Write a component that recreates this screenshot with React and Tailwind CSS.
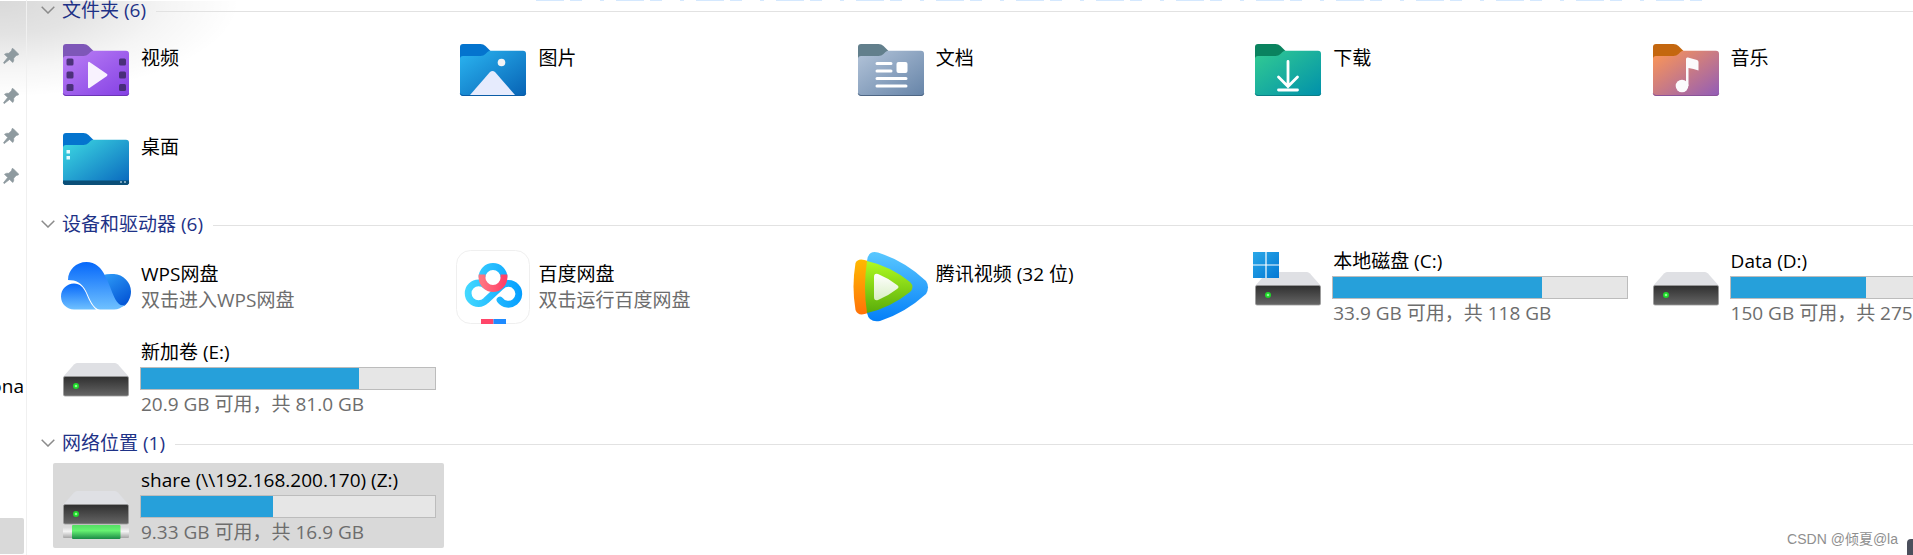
import React from 'react';
import clsx from 'clsx';

const Folder = ({ id, tab, from, to, edge, children }) => (
    <svg viewBox="0 0 76 76" className="size-19 shrink-0" aria-hidden="true">
        <defs>
            <linearGradient id={id} x1="0" y1="0" x2="1" y2="1">
                <stop offset="0" stopColor={from} />
                <stop offset="1" stopColor={to} />
            </linearGradient>
        </defs>
        <path d="M5 12q0-3 3-3h17.500q3 0 5 2l5 5v8H5z" fill={tab} />
        <path d="M5 24q0-3 3-3h17.500q3 0 5-2l2-2q1.500-1.300 3-1.300H68q3 0 3 3V58q0 3-3 3H8q-3 0-3-3z" fill={`url(#${id})`} />
        <path d="M5.300 58.500q.500 2 2.700 2h60q2.200 0 2.700-2" fill="none" stroke={edge} strokeWidth="1" />
        {children}
    </svg>
);

const VideosIcon = () => (
    <Folder id="videos" tab="#7e57b8" from="#bb80f5" to="#8440e4" edge="#6b35b5">
        {[27, 40, 52.500].map((y) => (
            <g key={y} fill="#3f2a6b" opacity=".88">
                <rect x="8.500" y={y - 3.500} width="7" height="7" rx="1.500" />
                <rect x="61" y={y - 3.500} width="7" height="7" rx="1.500" />
            </g>
        ))}
        <path d="M30 27.500v25q.300 1.200 1.500.600l17.500-12.200q1-1 0-1.800l-17.500-12.200q-1.200-.600-1.500.600z" fill="#f8f2fe" />
    </Folder>
);

const PicturesIcon = () => (
    <Folder id="pictures" tab="#0474ce" from="#2bb5f1" to="#0762b4" edge="#0a5ca6">
        <path d="M15 60 35 37q2.500-2 5 0l20 23z" fill="#e6ebfd" />
        <circle cx="46.500" cy="27.500" r="3.800" fill="#f2f3f5" />
    </Folder>
);

const DocumentsIcon = () => (
    <Folder id="documents" tab="#627f8c" from="#b3c4d9" to="#6684a8" edge="#4e6684">
        <path d="M24 28.500h14M24 36h14M24 43.500h29M24 51h29" stroke="#fff" strokeWidth="3" strokeLinecap="round" />
        <rect x="43.500" y="27" width="11" height="11" rx="2" fill="#fff" />
    </Folder>
);

const DownloadsIcon = () => (
    <Folder id="downloads" tab="#0a835f" from="#33cc92" to="#0090ab" edge="#0b7f86">
        <path d="M38 26.500v24M28.500 42l9.500 9.500 9.500-9.500M28.500 55h19" fill="none" stroke="#fff" strokeWidth="2.800" strokeLinecap="round" />
    </Folder>
);

const MusicIcon = () => (
    <Folder id="music" tab="#c4670f" from="#ff9853" to="#915cb8" edge="#8a5398">
        <circle cx="34" cy="51" r="6.300" fill="#fbfafc" />
        <path d="M38 51V24q0-2 2-1.500l9 2.500q1.500.500 1.500 2v8.500q-5-2-10-2.500v18z" fill="#fbfafc" />
    </Folder>
);

const DesktopIcon = () => (
    <Folder id="desktop" tab="#0474ce" from="#3edbe3" to="#0865bd" edge="#0b4d75">
        <path d="M5 56.500h66V58q0 3-3 3H8q-3 0-3-3z" fill="#0b4f78" />
        <path d="M8.500 26h3.500v3.500H8.500zM8.500 32h3.500v3.500H8.500z" fill="#e6fbfd" />
        <path d="M62 58h2M66 58h2" stroke="#9fc1d4" strokeWidth="1.500" />
    </Folder>
);

const WpsIcon = () => (
    <svg viewBox="0 0 76 76" className="size-19 shrink-0" aria-hidden="true">
        <defs>
            <linearGradient id="wps-main" x1="0" y1="0" x2="0" y2="1">
                <stop offset="0" stopColor="#0668fa" />
                <stop offset="1" stopColor="#6fc1ff" />
            </linearGradient>
            <linearGradient id="wps-side" x1="0" y1="0" x2=".6" y2="1">
                <stop offset="0" stopColor="#2f9df8" />
                <stop offset="1" stopColor="#0557d6" />
            </linearGradient>
        </defs>
        <path d="M45 26Q50 24.500 56 25c9 .500 17 8 17 17.500 0 6-3 12-7 14.500l-6 1z" fill="url(#wps-side)" />
        <path d="M10 31C10 21 18 13 28.500 13 37 13 44 19 47 27c6 10 8 23 14 28 2 1.500 4 1.500 6 .500C64 58.500 60 60.500 56 60.500H42C35 60 32 50 28 42 24 34 18 31 10 31z" fill="url(#wps-main)" />
        <path d="M16 34.500c6 0 9.500 4 12 9.500 2.500 6 5 12 10 16.500H16C9 60.500 3 55 3 47.500s6-13 13-13z" fill="url(#wps-main)" />
    </svg>
);

const BaiduIcon = () => (
    <svg viewBox="0 0 76 76" className="size-19 shrink-0" aria-hidden="true">
        <defs>
            <linearGradient id="bd-blue" gradientUnits="userSpaceOnUse" x1="8" y1="0" x2="66" y2="0">
                <stop offset="0" stopColor="#46dbff" />
                <stop offset="1" stopColor="#069fff" />
            </linearGradient>
            <linearGradient id="bd-red" x1="0" y1="0" x2="1" y2="0">
                <stop offset="0" stopColor="#ff7480" />
                <stop offset="1" stopColor="#ff4168" />
            </linearGradient>
        </defs>
        <rect x="1.500" y="1.500" width="73" height="73" rx="14" fill="#fff" stroke="#efefef" />
        <g fill="none" stroke="url(#bd-blue)" strokeWidth="6.800" strokeLinecap="round">
            <path d="M27 28.500a11 11 0 0 1 22 0" strokeLinecap="butt" />
            <path d="M31 37A10.400 10.400 0 1 0 31 51.500L46 37.500A10.400 10.400 0 1 1 45 51" />
        </g>
        <path d="M27 25.500v3a11 11 0 0 0 22 0v-3" fill="none" stroke="url(#bd-red)" strokeWidth="6.800" />
        <path d="M26 70h12.500v5H26z" fill="#ff4569" />
        <path d="M38.500 70H51v5H38.500z" fill="#1e8bff" />
    </svg>
);

const TencentIcon = () => (
    <svg viewBox="0 0 76 76" className="size-19 shrink-0" aria-hidden="true">
        <defs>
            <linearGradient id="tx-orange" x1="0" y1="0" x2="0" y2="1">
                <stop offset="0" stopColor="#ffb900" />
                <stop offset="1" stopColor="#ff7208" />
            </linearGradient>
            <linearGradient id="tx-blue" x1="0" y1="0" x2="0" y2="1">
                <stop offset="0" stopColor="#5ac8ff" />
                <stop offset="1" stopColor="#037ff8" />
            </linearGradient>
            <linearGradient id="tx-green" x1="0" y1="0" x2="0" y2="1">
                <stop offset="0" stopColor="#b0fb22" />
                <stop offset="1" stopColor="#59ac0a" />
            </linearGradient>
            <linearGradient id="tx-play" x1="0" y1="0" x2="0" y2="1">
                <stop offset="0" stopColor="#fff" />
                <stop offset="1" stopColor="#d9efc4" />
            </linearGradient>
        </defs>
        <path d="M15 12Q5 8 2.500 14-1.500 38 2.500 61 5 68 15 64z" fill="url(#tx-orange)" />
        <path d="M14 12Q15 1 25 3.500 52 12 73 32q4 6 0 13Q52 64 27 72 16 74 14 64z" fill="url(#tx-blue)" />
        <path d="M14 12Q37 17 57 33q5 5 0 10Q37 59 14 64q-4-26 0-52z" fill="url(#tx-green)" />
        <path d="M21 28q0-4 4-3 10 4 19 11 3 2 0 4-9 7-19 11-4 1-4-3z" fill="url(#tx-play)" />
    </svg>
);

const DriveIcon = ({ windows, network }) => (
    <svg viewBox="0 0 76 76" className="size-19 shrink-0" aria-hidden="true">
        <defs>
            <linearGradient id="drive-front" x1="0" y1="0" x2="0" y2="1">
                <stop offset="0" stopColor="#2f2f2f" />
                <stop offset="1" stopColor="#666" />
            </linearGradient>
            <linearGradient id="drive-pipe" x1="0" y1="0" x2="0" y2="1">
                <stop offset="0" stopColor="#d8d8d8" />
                <stop offset=".4" stopColor="#f4f4f4" />
                <stop offset="1" stopColor="#a5a5a5" />
            </linearGradient>
            <linearGradient id="drive-green" x1="0" y1="0" x2="0" y2="1">
                <stop offset="0" stopColor="#54df64" />
                <stop offset=".4" stopColor="#66f272" />
                <stop offset="1" stopColor="#1a8a46" />
            </linearGradient>
            <linearGradient id="win-tile" x1="0" y1="0" x2="1" y2="1">
                <stop offset="0" stopColor="#2aa8e8" />
                <stop offset="1" stopColor="#0478d4" />
            </linearGradient>
        </defs>
        <path d="M19 23h38q1.500 0 3 1.500L71 37H5l11-12.500q1.500-1.500 3-1.500z" fill="#dfe0e4" />
        <rect x="5.500" y="36.500" width="65" height="19.500" rx="1.500" fill="url(#drive-front)" stroke="#9a9a9a" strokeWidth=".8" />
        <circle cx="18" cy="46" r="3" fill="#1fd82a" />
        <circle cx="18" cy="46" r="1.300" fill="#8dff8f" />
        {windows && (
            <g>
                <rect x="3" y="3" width="26" height="26" fill="#fff" />
                <path d="M3 3h12.400v12.400H3zM16.600 3H29v12.400H16.600zM3 16.600h12.400V29H3zM16.600 16.600H29V29H16.600z" fill="url(#win-tile)" />
            </g>
        )}
        {network && (
            <g>
                <rect x="5" y="59" width="66" height="11" rx="1" fill="url(#drive-pipe)" />
                <rect x="14" y="57" width="48.500" height="14" rx="1" fill="url(#drive-green)" />
            </g>
        )}
    </svg>
);

const Pin = () => (
    <svg viewBox="0 0 16 16" className="size-4" aria-hidden="true">
        <path
            d="M10 .500 15.500 6q.500.600-.300.900l-2 .600-2.500 2.700q.500 2.400-1 4.300L6.600 11.400 1.200 15.600.500 14.800 4.700 9.500 1.500 6.300Q3.500 4.800 5.800 5.300l2.700-2.500L9.100.800q.200-.700.900-.300z"
            fill="#8e9a9f"
            stroke="#8e9a9f"
            strokeWidth=".7"
            strokeLinejoin="round"
        />
    </svg>
);

const folders = [
    { name: '视频', icon: VideosIcon },
    { name: '图片', icon: PicturesIcon },
    { name: '文档', icon: DocumentsIcon },
    { name: '下载', icon: DownloadsIcon },
    { name: '音乐', icon: MusicIcon },
    { name: '桌面', icon: DesktopIcon },
];

const devices = [
    { name: 'WPS网盘', note: '双击进入WPS网盘', icon: WpsIcon },
    { name: '百度网盘', note: '双击运行百度网盘', icon: BaiduIcon },
    { name: '腾讯视频 (32 位)', icon: TencentIcon },
    { name: '本地磁盘 (C:)', note: '33.9 GB 可用，共 118 GB', used: 71, windows: true, icon: DriveIcon },
    { name: 'Data (D:)', note: '150 GB 可用，共 275 GB', used: 46, icon: DriveIcon },
    { name: '新加卷 (E:)', note: '20.9 GB 可用，共 81.0 GB', used: 74, icon: DriveIcon },
];

const network = [
    { name: 'share (\\\\192.168.200.170) (Z:)', note: '9.33 GB 可用，共 16.9 GB', used: 45, network: true, selected: true, icon: DriveIcon },
];

const Tile = ({ item, compact }) => {
    const Icon = item.icon;
    const isDrive = item.used !== undefined;

    return (
        <button
            type="button"
            className={clsx(
                'flex items-start gap-1.5 w-[391px] min-h-[85px] pt-[5px] pl-[5px] pr-2 rounded-xs text-left whitespace-nowrap',
                item.selected && 'bg-[#d9d9d9]'
            )}
        >
            <Icon windows={item.windows} network={item.network} />
            {isDrive ? (
                <span className="flex-1 min-w-0 flex flex-col gap-0.5">
                    <span className="pl-px leading-[25px]">{item.name}</span>
                    <span
                        role="meter"
                        aria-label={item.name}
                        aria-valuenow={item.used}
                        aria-valuemin={0}
                        aria-valuemax={100}
                        className="block h-[23px] border border-[#bcbcbc] bg-[#e6e6e6]"
                    >
                        <span className="block h-full bg-[#26a0da]" style={{ width: `${item.used}%` }} />
                    </span>
                    <span className="pl-px leading-6 text-[#6d6d6d]">{item.note}</span>
                </span>
            ) : (
                <span className={clsx('flex flex-col pl-px leading-[26px]', compact ? 'pt-2.5' : 'pt-3')}>
                    <span>{item.name}</span>
                    {item.note && <span className="text-[#6d6d6d]">{item.note}</span>}
                </span>
            )}
        </button>
    );
};

const Group = ({ title, items, compact, className }) => (
    <section className={className}>
        <h2 className="flex items-center gap-2.5 h-6 mb-[7px] pl-3.5">
            <button type="button" aria-expanded="true" className="flex items-center gap-[7px] pb-0.5 text-[#1e3287] whitespace-nowrap">
                <svg viewBox="0 0 14 8" className="w-3.5 h-2" aria-hidden="true">
                    <path d="M.700.700 7 7 13.300.700" fill="none" stroke="#8b8b8b" strokeWidth="1.500" />
                </svg>
                {title} ({items.length})
            </button>
            <span className="flex-1 h-px bg-[#e2e2e2]" />
        </h2>
        <div className={clsx('grid grid-cols-5 ml-[26px] -mr-[127px]', compact ? 'gap-y-1' : 'gap-y-1.5')}>
            {items.map((item) => (
                <Tile key={item.name} item={item} compact={compact} />
            ))}
        </div>
    </section>
);

const App = () => (
    <div className="relative flex min-h-screen overflow-hidden bg-white text-black text-[19px] font-['Open_Sans','Noto_Sans_CJK_SC',sans-serif]">
        {/* Soft shadow cast by the window above */}
        <div className="absolute top-px left-0 w-60 h-24 bg-[radial-gradient(ellipse_farthest-side_at_top_left,#00000026,#0000001c_35%,#0000000a_70%,transparent)]" />
        <div className="absolute top-0 left-[28%] right-[11%] h-px bg-[repeating-linear-gradient(90deg,#d4e8fe_0_28px,transparent_28px_34px,#d4e8fe_34px_46px,transparent_46px_64px,#d4e8fe_64px_68px,transparent_68px_80px)]" />

        <aside className="relative w-[27px] shrink-0 border-r border-[#f0f0f0] overflow-hidden pt-9">
            {[1, 2, 3, 4].map((n) => (
                <div key={n} className="flex items-center h-10 pl-[3px]">
                    <Pin />
                </div>
            ))}
            <div className="flex justify-end h-10 pr-0.5 mt-[170px] leading-10">ona</div>
            <div className="h-9 w-6 mt-[112px] rounded-r-xs bg-[#d9d9d9]" />
        </aside>

        <main className="relative flex-1 min-w-0 -mt-px">
            <Group title="文件夹" items={folders} compact className="pb-[9px]" />
            <Group title="设备和驱动器" items={devices} className="pb-3" />
            <Group title="网络位置" items={network} />
        </main>

        <div className="absolute right-[15px] bottom-1 text-sm leading-6 text-[#8f8f8f] font-['Liberation_Sans','Noto_Sans_CJK_SC',sans-serif]">
            CSDN @倾夏@la
        </div>
        <div className="absolute right-0 bottom-0 w-1.5 h-4 rounded-tl-sm bg-[#4b4f5c]" />
    </div>
);

export default App;
